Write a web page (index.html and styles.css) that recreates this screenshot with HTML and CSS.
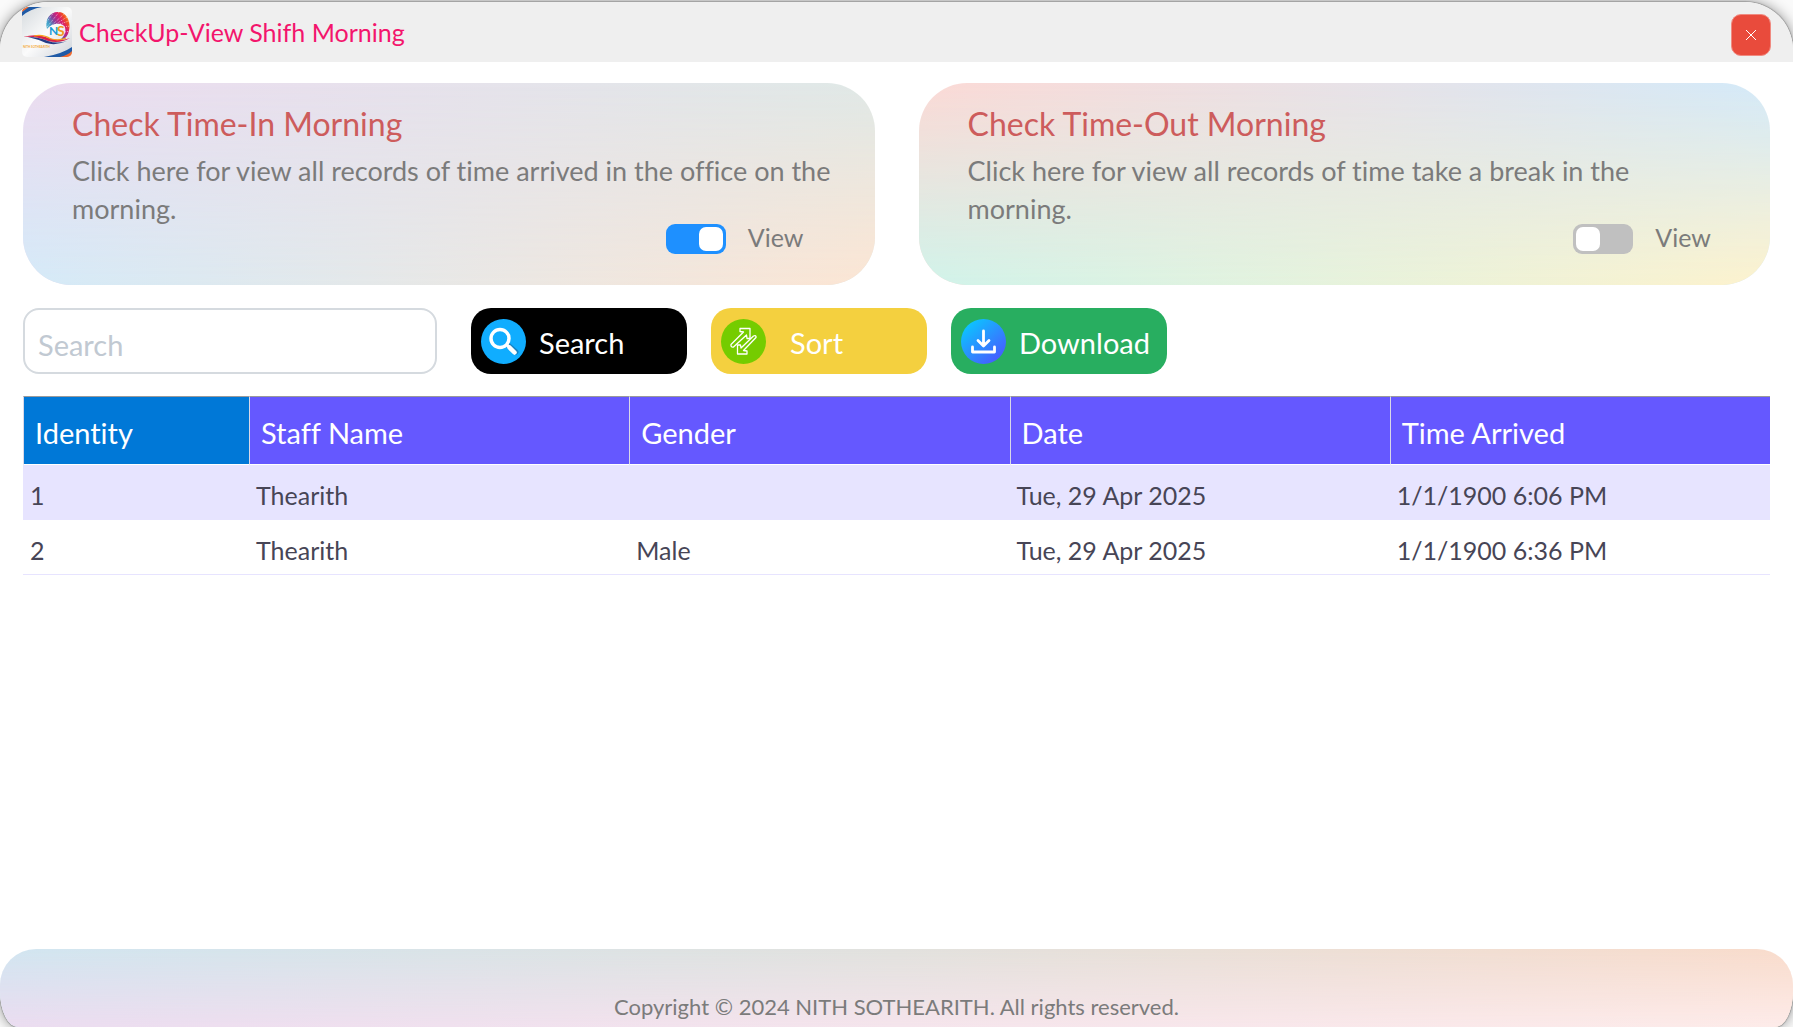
FILE: index.html
```html
<!DOCTYPE html>
<html lang="en">
<head>
<meta charset="utf-8">
<title>CheckUp-View Shifh Morning</title>
<link rel="stylesheet" href="styles.css">
</head>
<body>
<div class="window">
  <header class="titlebar">
    <svg class="logo" viewBox="0 0 50 50" aria-hidden="true">
      <defs>
        <clipPath id="logo-clip"><rect width="50" height="50" rx="5"/></clipPath>
        <linearGradient id="logo-bg" x1="0" y1="0" x2="1" y2="1"><stop offset="0" stop-color="#d5dade"/><stop offset=".5" stop-color="#fbfbfb"/><stop offset="1" stop-color="#cfd4da"/></linearGradient>
        <linearGradient id="logo-fan" x1="0" y1=".9" x2="1" y2=".2"><stop offset="0" stop-color="#7fd0e0"/><stop offset=".3" stop-color="#3fa0c8"/><stop offset=".5" stop-color="#8a3d9a"/><stop offset=".7" stop-color="#d81b72"/><stop offset=".85" stop-color="#f04a23"/><stop offset="1" stop-color="#f9b233"/></linearGradient>
      </defs>
      <g clip-path="url(#logo-clip)">
        <rect width="50" height="50" fill="url(#logo-bg)"/>
        <path d="M0 0H9L0 5Z" fill="#f26a2e"/>
        <path d="M7 0H20Q8 2 0 9V5Z" fill="#1f5aa6"/>
        <path d="M50 50H36Q45 47 50 43Z" fill="#f26a2e"/>
        <path d="M22 50Q40 47 50 40V44Q46 48 38 50Z" fill="#1f5aa6"/>
        <path d="M25 22C22 12 29 4 37 5C46 6 50 17 46 27C44 31 41 33 38 33C44 28 45 21 41 18C37 16 30 16 25 22Z" fill="url(#logo-fan)"/>
        <path d="M24 16L32 5M25 20L38 4M29 19L42 7M34 17L45 10M38 17L47 14M42 20L48 19M43 25L48 24" stroke="#fff" stroke-width=".6" stroke-dasharray="1 1"/>
        <path d="M1 30Q15 26 27 31Q38 35 48 31Q38 37 26 34Q14 29 1 30Z" fill="#d6224a"/>
        <path d="M6 30Q17 30 26 34Q35 37 45 34Q34 39 24 36Q15 32 6 30Z" fill="#243b86"/>
        <path d="M12 29Q21 27 29 32Q37 34 44 31" fill="none" stroke="#f6a21c" stroke-width="1.2"/>
        <text class="logo-n" x="27" y="28">N</text>
        <text class="logo-s" x="35" y="29">S</text>
        <text class="logo-name" x="1" y="41">NITH SOTHEARITH</text>
      </g>
    </svg>
    <h1 class="title">CheckUp-View Shifh Morning</h1>
    <button class="close" type="button" aria-label="Close">
      <svg viewBox="0 0 10 10" width="10" height="10"><path d="M0 0L10 10M10 0L0 10" stroke="#fff" stroke-width="1" fill="none"/></svg>
    </button>
  </header>

  <main class="content">
    <div class="cards">
      <section class="card card-in">
        <h2>Check Time-In Morning</h2>
        <p>Click here for view all records of time arrived in the office on the morning.</p>
        <label class="switch"><input type="checkbox" checked><span>View</span></label>
      </section>
      <section class="card card-out">
        <h2>Check Time-Out Morning</h2>
        <p>Click here for view all records of time take a break in the morning.</p>
        <label class="switch"><input type="checkbox"><span>View</span></label>
      </section>
    </div>

    <div class="toolbar">
      <input class="search" type="text" placeholder="Search" aria-label="Search">
      <button class="btn btn-search" type="button">
        <svg viewBox="0 0 45 45" aria-hidden="true"><circle cx="22.500" cy="22.500" r="22.500" fill="#10adff"/><path d="M27 26L35 33" stroke="#1684c4" stroke-width="5" stroke-linecap="round"/><circle cx="19" cy="19.500" r="9" fill="none" stroke="#fff" stroke-width="3.500"/><path d="M25.500 25.500L28 28" stroke="#fff" stroke-width="2.500"/><path d="M28.500 28.500L33.500 33.500" stroke="#fff" stroke-width="4.500" stroke-linecap="round"/></svg>
        <span>Search</span>
      </button>
      <button class="btn btn-sort" type="button">
        <svg viewBox="0 0 45 45" aria-hidden="true"><circle cx="22.500" cy="22.500" r="22.500" fill="#75cc00"/><g fill="none" stroke="#fff" stroke-width="1.300" stroke-linejoin="round"><path d="M10 25.500L22.500 13L19 12.500V9.500H29V19.500H26L25.500 16L12.500 28Q9.500 28.500 10 25.500Z"/><path d="M35 18.500L22.500 31.500L26 32V35H16.500V26H19.500L20 29L32.500 17Q35.500 16 35 18.500Z"/></g></svg>
        <span>Sort</span>
      </button>
      <button class="btn btn-download" type="button">
        <svg viewBox="0 0 45 45" aria-hidden="true"><defs><linearGradient id="dl" x1=".15" y1=".1" x2=".85" y2=".9"><stop offset="0" stop-color="#0cc4ff"/><stop offset="1" stop-color="#475cff"/></linearGradient></defs><circle cx="22.500" cy="22.500" r="22.500" fill="url(#dl)"/><path d="M22.500 12V26M17 21.500L22.500 27L28 21.500M11.500 28V33H33.500V28" fill="none" stroke="#fff" stroke-width="2.800" stroke-linecap="round" stroke-linejoin="round"/></svg>
        <span>Download</span>
      </button>
    </div>

    <table class="records">
      <colgroup><col class="col-id"><col><col><col><col></colgroup>
      <thead>
        <tr><th class="selected" scope="col">Identity</th><th scope="col">Staff Name</th><th scope="col">Gender</th><th scope="col">Date</th><th scope="col">Time Arrived</th></tr>
      </thead>
      <tbody>
        <tr><td>1</td><td>Thearith</td><td></td><td>Tue, 29 Apr 2025</td><td>1/1/1900 6:06 PM</td></tr>
        <tr><td>2</td><td>Thearith</td><td>Male</td><td>Tue, 29 Apr 2025</td><td>1/1/1900 6:36 PM</td></tr>
      </tbody>
    </table>
  </main>

  <footer class="footer"><p>Copyright © 2024 NITH SOTHEARITH. All rights reserved.</p></footer>
</div>
</body>
</html>
```

FILE: styles.css
```css
* { box-sizing: border-box; }

body {
  margin: 0;
  padding-top: 2px;
  min-height: 100vh;
  display: flex;
  background: #fafafa;
  font-family: Lato, "Noto Sans", sans-serif;
  font-variant-ligatures: none;
  color: #7b7b7b;
}

h1, h2, p { margin: 0; font-weight: 400; }
button, input { font-family: inherit; }
button { border: 0; cursor: pointer; }

.window {
  flex: 1;
  display: flex;
  flex-direction: column;
  overflow: hidden;
  background: #fff;
  border-radius: 48px 48px 18px 18px / 48px 48px 36px 36px;
  box-shadow: 0 0 1px 1px #a0a0a0, 0 0 14px rgba(0, 0, 0, .45);
}

/* Title bar */
.titlebar {
  display: flex;
  align-items: center;
  height: 60px;
  padding: 0 22px;
  background: #efefef;
}
.logo { width: 50px; height: 50px; margin-right: 7px; }
.logo-n { font-size: 12px; font-weight: 700; fill: #169ad6; }
.logo-s { font-size: 14px; font-weight: 700; fill: #f39a1e; }
.logo-name { font-size: 3px; font-weight: 700; fill: #f4a93a; }
.title { flex: 1; font-size: 25px; line-height: 32px; color: #f3156c; }
.close {
  display: grid;
  place-items: center;
  width: 40px;
  height: 42px;
  margin-top: 6px;
  padding: 0;
  border: 1px solid #f08a80;
  border-radius: 10px;
  background: #e94b3c;
}

.content { flex: 1; padding: 21px 23px; }

/* Cards */
.cards { display: grid; grid-template-columns: 1fr 1fr; gap: 44px; }
.card, .footer { position: relative; isolation: isolate; overflow: hidden; }
.card::before, .footer::before {
  content: "";
  position: absolute;
  inset: 0;
  z-index: -1;
  -webkit-mask-image: linear-gradient(transparent, #000);
  mask-image: linear-gradient(transparent, #000);
}
.card {
  padding: 20px 40px 31px 49px;
  border-radius: 48px;
}
.card-in { background: linear-gradient(90deg, #ecdcf0, #e0e9e7); }
.card-in::before { background: linear-gradient(90deg, #d4eaf8, #fce5d3); }
.card-out { background: linear-gradient(90deg, #fcdad6, #d4eaf9); }
.card-out::before { background: linear-gradient(90deg, #d0f3ea, #fdf2cd); }
.card h2 { font-size: 32px; line-height: 42px; color: #cd5c5c; }
.card p { margin: 7px 0 -4px; font-size: 27px; line-height: 38px; }

.switch {
  display: flex;
  justify-content: flex-end;
  align-items: center;
  gap: 22px;
  font-size: 25px;
  line-height: 26px;
}
.switch span { padding-bottom: 4px; }
.card-in .switch { padding-right: 31px; }
.card-out .switch { padding-right: 19px; }
.switch input {
  appearance: none;
  display: flex;
  width: 60px;
  height: 30px;
  margin: 0;
  padding: 3px;
  border-radius: 9px;
  background: #c0c0c0;
}
.switch input::before {
  content: "";
  width: 24px;
  height: 24px;
  border-radius: 7px;
  background: #fff;
}
.switch input:checked { justify-content: flex-end; background: #1e90ff; }

/* Toolbar */
.toolbar { display: flex; gap: 24px; margin: 23px 0 22px; }
.search {
  width: 414px;
  height: 66px;
  margin-right: 10px;
  padding: 6px 13px 0;
  border: 2px solid #d5dadf;
  border-radius: 16px;
  background: #fff;
  font-size: 29px;
  color: #444;
}
.search::placeholder { color: #c1c9d2; opacity: 1; }
.btn {
  display: flex;
  align-items: center;
  gap: 13px;
  width: 216px;
  height: 66px;
  padding: 0 10px;
  border-radius: 20px;
  font-size: 29px;
  color: #fff;
}
.btn svg { width: 45px; height: 45px; }
.btn span { padding-top: 3px; }
.btn-search { background: #000; }
.btn-sort { gap: 24px; background: #f4d03f; }
.btn-download { background: #28ae60; }

/* Records table */
.records {
  width: 100%;
  table-layout: fixed;
  border-collapse: separate;
  border-spacing: 0;
  text-align: left;
}
.col-id { width: 226px; }
.records th {
  height: 69px;
  padding: 4px 11px 0;
  border-top: 1px solid #9a9a9a;
  border-left: 1px solid #d8d8e8;
  border-bottom: 1px solid #fff;
  background: #6558ff;
  font-size: 29px;
  font-weight: 400;
  color: #fff;
}
.records th.selected { background: #0078d7; }
.records td {
  height: 55px;
  padding: 6px 7px 0;
  border-bottom: 1px solid #e7e4ff;
  font-size: 25px;
  color: #474556;
}
.records tbody tr:nth-child(odd) td { background: #e7e4ff; }

/* Footer */
.footer {
  height: 78px;
  padding-top: 42px;
  border-radius: 36px 36px 0 0;
  background: linear-gradient(90deg, #d2e6f1, #e2e2de 50%, #f9dccc);
  text-align: center;
  font-size: 22px;
  line-height: 32px;
}
.footer::before { background: linear-gradient(90deg, #ebdcf0, #f5e4ec 50%, #fdebe9); }
```
